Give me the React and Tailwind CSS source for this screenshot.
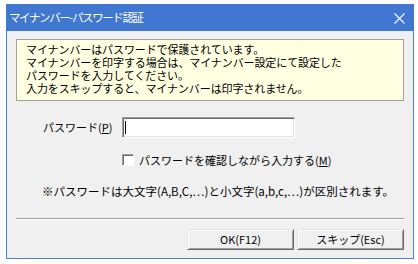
const font = { fontFamily: '"Noto Sans CJK JP", "Noto Sans", sans-serif' }

function TitleBar() {
  return (
    <div className="flex h-[26px] items-center bg-[#3f77d1] pl-[3px] pr-[9px] text-white">
      <span className="text-[11.5px] tracking-[-1.4px] leading-none">マイナンバー-パスワード認証</span>
      <div className="flex-1" />
      <svg width="11" height="11" viewBox="0 0 11 11" className="mt-[1px]">
        <path d="M0.5 0.5 L10.5 10.5 M10.5 0.5 L0.5 10.5" stroke="#fff" strokeWidth="1.1" />
      </svg>
    </div>
  )
}

function WinButton({ children }) {
  return (
    <button className="flex h-[21px] w-[107px] items-center justify-center border border-t-[#e3e3e3] border-l-[#e3e3e3] border-b-[#696969] border-r-[#696969] bg-[#f0f0f0] text-[11px] leading-none text-black shadow-[inset_1px_1px_#ffffff,inset_-1px_-1px_#a0a0a0]">
      {children}
    </button>
  )
}

export default function App() {
  return (
    <div className="h-[264px] w-[418px] bg-white pl-[6px] pt-[4px]" style={font}>
      <div className="flex h-[255px] w-[408px] flex-col border border-t-0 border-[#4a80d8]">
        <div className="-mx-px">
          <div className="border-t border-[#3f77d1]" />
          <TitleBar />
        </div>
        <div className="flex flex-1 flex-col bg-[#f0f0f0] px-[9px] text-black">
          {/* info box */}
          <div className="mt-[8px] border border-[#a0a0a0] bg-[#ffffe1] pb-[5px] pl-[9px] pt-[3px] text-[11px] leading-[13px] tracking-[-0.1px]">
            <p>マイナンバーはパスワードで保護されています。</p>
            <p>マイナンバーを印字する場合は、マイナンバー設定にて設定した</p>
            <p>パスワードを入力してください。</p>
            <p>入力をスキップすると、マイナンバーは印字されません。</p>
          </div>

          {/* password */}
          <div className="mt-[16px] flex items-center text-[11px] leading-none">
            <div className="w-[106px] pl-[27px]">
              パスワード(<span className="underline">P</span>)
            </div>
            <div className="flex h-[21px] w-[173px] items-center border border-t-[#a0a0a0] border-l-[#a0a0a0] border-b-white border-r-white bg-white pl-[2px] shadow-[inset_1px_1px_#696969,inset_-1px_-1px_#e3e3e3]">
              <div className="h-[13px] w-px bg-black" />
            </div>
          </div>

          {/* checkbox */}
          <div className="mt-[16px] flex items-center pl-[106px] text-[11px] leading-none">
            <div className="h-[12px] w-[12px] border border-t-[#a0a0a0] border-l-[#a0a0a0] border-b-white border-r-white bg-white shadow-[inset_1px_1px_#696969]" />
            <span className="ml-[5px]">
              パスワードを確認しながら入力する(<span className="underline">M</span>)
            </span>
          </div>

          {/* note */}
          <p className="mt-[19px] pl-[26px] text-[11.5px] leading-[13px]">
            ※パスワードは大文字(A,B,C,…)と小文字(a,b,c,…)が区別されます。
          </p>

          {/* separator */}
          <div className="mt-[20px] border-t border-[#a0a0a0] border-b border-b-white" />

          {/* buttons */}
          <div className="mt-[9px] flex justify-end gap-[3px]">
            <WinButton>OK(F12)</WinButton>
            <WinButton>スキップ(Esc)</WinButton>
          </div>
        </div>
      </div>
    </div>
  )
}
